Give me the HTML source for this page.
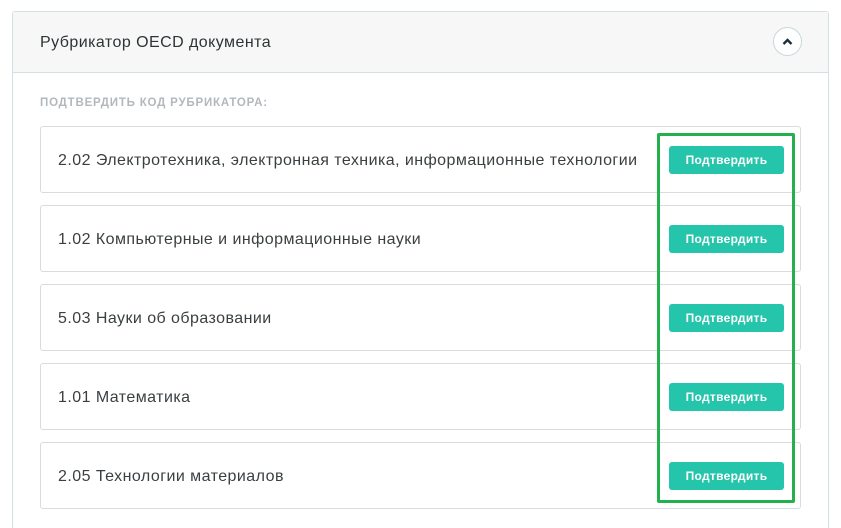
<!DOCTYPE html>
<html><head><meta charset="utf-8"><style>
html,body{margin:0;width:841px;height:528px;overflow:hidden}
body{background:#fff;font-family:"Liberation Sans",sans-serif;position:relative}
.panel{position:absolute;left:12px;top:11px;width:815px;height:518px;border:1px solid #d3dfe4;border-bottom:none;border-radius:3px 3px 0 0;box-sizing:border-box;width:817px}
.hdr{height:60px;background:#f7f7f7;border-bottom:1px solid #d3dfe4;position:relative}
.hdr span{position:absolute;left:27px;top:22px;font-size:16px;color:#2d3436;letter-spacing:.45px}
.circ{position:absolute;left:760px;top:15px;width:27px;height:27px;border:1px solid #c9d8de;border-radius:50%;background:#fff}
.lbl{position:absolute;left:40px;top:97px;font-size:11.5px;font-weight:bold;color:#b3b8bc;letter-spacing:.8px}
.row{position:absolute;left:40px;width:759px;height:65px;border:1px solid #d8dcde;border-radius:3px}
.row span{position:absolute;left:17px;top:25px;font-size:16px;color:#3a3f42;letter-spacing:.45px}
.btn{position:absolute;left:628px;top:19px;width:115px;height:28px;background:#25c5ab;border-radius:3px;color:#fff;font-size:12px;font-weight:bold;text-align:center;line-height:28px;letter-spacing:.3px}
.green{position:absolute;left:657px;top:133px;width:132px;height:364px;border:3px solid #22b14c;border-radius:2px}
</style></head><body>
<div class="panel"><div class="hdr"><span>Рубрикатор OECD документа</span>
<div class="circ"><svg width="27" height="27" viewBox="0 0 27 27"><path d="M9.5 16 L13.5 12 L17.5 16" stroke="#1d2f3b" stroke-width="2.4" fill="none"/></svg></div></div></div>
<div class="lbl">ПОДТВЕРДИТЬ КОД РУБРИКАТОРА:</div>
<div class="row" style="top:126px"><span>2.02 Электротехника, электронная техника, информационные технологии</span><div class="btn">Подтвердить</div></div>
<div class="row" style="top:205px"><span>1.02 Компьютерные и информационные науки</span><div class="btn">Подтвердить</div></div>
<div class="row" style="top:284px"><span>5.03 Науки об образовании</span><div class="btn">Подтвердить</div></div>
<div class="row" style="top:363px"><span>1.01 Математика</span><div class="btn">Подтвердить</div></div>
<div class="row" style="top:442px"><span>2.05 Технологии материалов</span><div class="btn">Подтвердить</div></div>
<div class="green"></div>
</body></html>
